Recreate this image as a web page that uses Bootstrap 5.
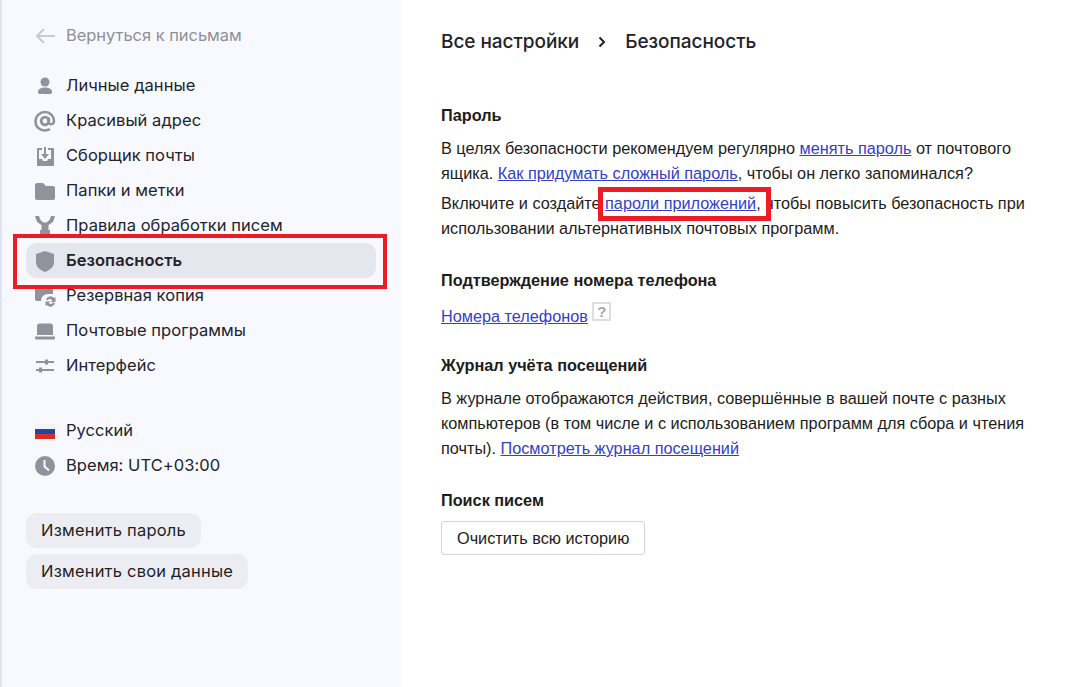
<!DOCTYPE html>
<html lang="ru">
<head>
  <meta charset="UTF-8" />
  <meta name="viewport" content="width=device-width, initial-scale=1" />
  <title>Безопасность</title>
  <link href="https://cdn.jsdelivr.net/npm/bootstrap@5.3.0/dist/css/bootstrap.min.css" rel="stylesheet" />
  <style>
    html, body { height: 687px; overflow: hidden; }
    body { background: #fff; color: #1f1f24; font-family: "Liberation Sans", Arial, sans-serif; }
    .page-wrap { position: relative; height: 687px; }
    .side-panel { width: 401px; height: 687px; flex: none; background: #f8f9ff; border-left: 2px solid #dfe3f5; padding: 18px 24px 0 24px; font-family: Inter, sans-serif; font-size: 16.5px; letter-spacing: .05px; }
    .back-row { height: 35px; color: #8f8f99; margin-bottom: 15px; padding-left: 8px; letter-spacing: -.05px; }
    .side-row { height: 35px; padding-left: 8px; border-radius: 11px; width: 350px; color: #23232b; }
    .side-row.active-row { background: #e4e7ee; font-weight: 600; }
    .side-ico { width: 22px; height: 22px; flex: none; margin-right: 10px; fill: #92929c; }
    .lang-block { margin-top: 30px; }
    .side-btn { display: block; width: fit-content; height: 35px; line-height: 35px; padding: 0 15px; border-radius: 11px; background: #ecedf2; color: #1f1f24; margin-bottom: 6px; letter-spacing: .2px; }
    .btn-block { margin-top: 30px; }
    .main-panel { padding: 0 0 0 40px; font-size: 16.25px; line-height: 25px; color: #1c1c1c; }
    .crumbs { font-family: Inter, sans-serif; font-size: 19px; font-weight: 500; letter-spacing: -.05px; height: 26px; line-height: 26px; margin-top: 29px; margin-bottom: 50px; color: #22222a; }
    .crumbs svg { margin: 0 19px; }
    .sect-title { font-weight: 700; font-size: 16.25px; line-height: 20px; margin-bottom: 11px; }
    .main-panel p { margin: 0; width: 640px; }
    .main-panel a { color: #3240c8; }
    .para-gap { margin-top: 5px !important; }
    .sect-gap { margin-top: 29px; }
    .main-panel p.phone-line { height: 25px; padding-top: 1px; margin-bottom: 0; }
    .help-box { display: inline-block; width: 19px; height: 19px; line-height: 15px; text-align: center; border: 2px solid #dedede; color: #a8a8a8; font-size: 15px; font-weight: 700; vertical-align: 5px; }
    .clear-btn { font-size: 16.25px; height: 34px; padding: 0 15px; border: 1px solid #d4d4d4; border-radius: 3px; background: #fff; color: #1c1c1c; line-height: 32px; }
    .red-frame { position: absolute; border: 4px solid #ed1c24; pointer-events: none; }
    .frame-nav { left: 13px; top: 234px; width: 374px; height: 55px; }
    .frame-link { left: 598px; top: 187px; width: 173px; height: 34px; border-width: 5px; }
  </style>
</head>
<body>
  <div class="page-wrap d-flex">
    <aside class="side-panel">
      <div class="back-row d-flex align-items-center">
        <svg class="side-ico" viewBox="0 0 22 22" style="fill:none"><path d="M21 11H3M10 4l-7 7 7 7" stroke="#c9c9cf" stroke-width="2"/></svg>Вернуться к письмам
      </div>
      <div class="side-row d-flex align-items-center">
        <svg class="side-ico" viewBox="0 0 22 22"><circle cx="11" cy="7" r="4.500"/><path d="M4 17c0-3 3-4.500 7-4.500s7 1.500 7 4.500c0 1.500-1 2-2 2H6c-1 0-2-.5-2-2z"/></svg>Личные данные
      </div>
      <div class="side-row d-flex align-items-center">
        <svg class="side-ico" viewBox="0 0 22 22" style="fill:none"><circle cx="11" cy="11" r="3.800" stroke="#92929c" stroke-width="2.800"/><path d="M14.800 7.500v4.500c0 3 5.200 3 5.200-1 0-5-4-9-9-9s-9.500 4-9.500 9.500 4.500 9 9.500 9c2 0 3.500-.5 5-1.300" stroke="#92929c" stroke-width="2.500"/></svg>Красивый адрес
      </div>
      <div class="side-row d-flex align-items-center">
        <svg class="side-ico" viewBox="0 0 22 22"><path d="M3 3h5v2H5v9h3l1 2h4l1-2h3V5h-3V3h5c.6 0 1 .4 1 1v16c0 .6-.4 1-1 1H4c-.6 0-1-.4-1-1V4c0-.6.4-1 1-1z"/><path d="M10 2h2v7h3l-4 5-4-5h3z"/></svg>Сборщик почты
      </div>
      <div class="side-row d-flex align-items-center">
        <svg class="side-ico" viewBox="0 0 22 22"><path d="M1 5c0-1 .6-2 2-2h6l3 3h7c1.500 0 2 1 2 2v10c0 1-.6 2-2 2H3c-1.400 0-2-1-2-2z"/></svg>Папки и метки
      </div>
      <div class="side-row d-flex align-items-center">
        <svg class="side-ico" viewBox="0 0 22 22"><path d="M1 1h4l1.500 4 3 2.500h3l3-2.500L17 1h4l-2 6-4.500 3v5h1.500v6H6v-6h1.500v-5L3 7z"/></svg>Правила обработки писем
      </div>
      <div class="side-row active-row d-flex align-items-center">
        <svg class="side-ico" viewBox="0 0 22 22"><path d="M11 1l9 3v8c0 5-4 8-9 10-5-2-9-5-9-10V4z"/></svg>Безопасность
      </div>
      <div class="side-row d-flex align-items-center">
        <svg class="side-ico" viewBox="0 0 22 22"><path d="M1 3c0-1 .6-2 2-2h5l2 2h7c1.500 0 2 1 2 2v4h-5c-4 0-7 3-7 7H3c-1.400 0-2-1-2-2z"/><path d="M12 15a4.500 4.500 0 0 1 8-2l1.500-1v5h-5l1.800-1.500A2.500 2.500 0 0 0 14 15zM21 18a4.500 4.500 0 0 1-8 2l-1.500 1v-4.500h5l-1.800 1.500a2.500 2.500 0 0 0 4.300-.5z"/></svg>Резервная копия
      </div>
      <div class="side-row d-flex align-items-center">
        <svg class="side-ico" viewBox="0 0 22 22"><path d="M3 6c0-1.500 1-2.500 2.500-2.500h11C18 3.500 19 4.500 19 6v9H3zM1 16.500h20V18c0 .8-.6 1.500-1.500 1.500h-17C1.600 19.500 1 18.800 1 18z"/></svg>Почтовые программы
      </div>
      <div class="side-row d-flex align-items-center">
        <svg class="side-ico" viewBox="0 0 22 22"><path d="M2 6h9V4.500h3V6h6v2h-6v1.500h-3V8H2zM2 14h3v-1.500h3V14h12v2H8v1.500H5V16H2z"/></svg>Интерфейс
      </div>
      <div class="lang-block">
        <div class="side-row d-flex align-items-center">
          <svg class="side-ico" viewBox="0 0 22 22"><path fill="#f4f4f6" d="M1 4h20v5H1z"/><path fill="#1f47a8" d="M1 9h20v5H1z"/><path fill="#d3301f" d="M1 14h20v5H1z"/></svg>Русский
        </div>
        <div class="side-row d-flex align-items-center">
          <svg class="side-ico" viewBox="0 0 22 22"><circle cx="11" cy="11" r="10"/><path d="M10.500 5v6.500l4.500 4" fill="none" stroke="#f8f9ff" stroke-width="2"/></svg>Время: UTC+03:00
        </div>
      </div>
      <div class="btn-block">
        <a class="side-btn text-decoration-none" href="#">Изменить пароль</a>
        <a class="side-btn text-decoration-none" href="#">Изменить свои данные</a>
      </div>
    </aside>
    <main class="main-panel flex-grow-1">
      <div class="crumbs d-flex align-items-center">
        Все настройки
        <svg width="8" height="12" viewBox="0 0 8 12" fill="none"><path d="M1.500 1.500L6 6l-4.500 4.500" stroke="#22222a" stroke-width="2"/></svg>
        Безопасность
      </div>
      <div class="sect-title">Пароль</div>
      <p>В целях безопасности рекомендуем регулярно <a href="#">менять пароль</a> от почтового<br>ящика. <a href="#">Как придумать сложный пароль</a>, чтобы он легко запоминался?</p>
      <p class="para-gap">Включите и создайте <a href="#">пароли приложений</a>, чтобы повысить безопасность при<br>использовании альтернативных почтовых программ.</p>
      <div class="sect-title sect-gap">Подтверждение номера телефона</div>
      <p class="phone-line"><a href="#">Номера телефонов</a> <span class="help-box">?</span></p>
      <div class="sect-title sect-gap">Журнал учёта посещений</div>
      <p>В журнале отображаются действия, совершённые в вашей почте с разных<br>компьютеров (в том числе и с использованием программ для сбора и чтения<br>почты). <a href="#">Посмотреть журнал посещений</a></p>
      <div class="sect-title sect-gap">Поиск писем</div>
      <button type="button" class="btn clear-btn">Очистить всю историю</button>
    </main>
    <div class="red-frame frame-nav"></div>
    <div class="red-frame frame-link"></div>
  </div>
<script src="https://cdn.jsdelivr.net/npm/bootstrap@5.3.0/dist/js/bootstrap.bundle.min.js"></script>
</body>
</html>
